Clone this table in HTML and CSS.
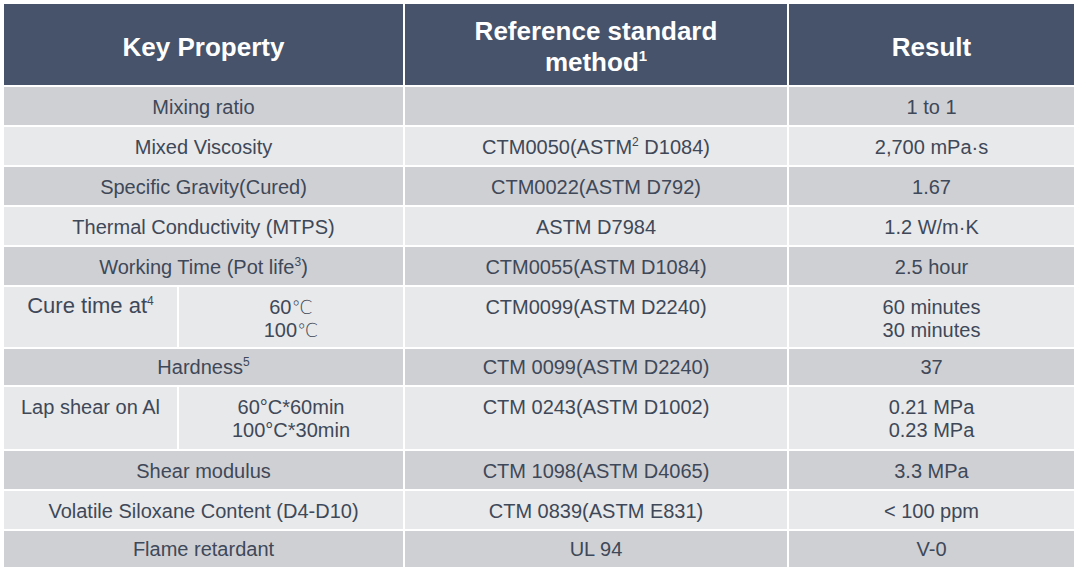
FILE: index.html
```html
<!DOCTYPE html>
<html lang="en">
<head>
<meta charset="utf-8">
<title>Key Properties</title>
<link rel="stylesheet" href="styles.css">
</head>
<body>
<div class="sheet">
  <div class="th span2"><span>Key Property</span></div>
  <div class="th"><span>Reference standard<br>method<sup>1</sup></span></div>
  <div class="th"><span>Result</span></div>

  <div class="td dark span2">Mixing ratio</div>
  <div class="td dark"></div>
  <div class="td dark">1 to 1</div>

  <div class="td light span2">Mixed Viscosity</div>
  <div class="td light">CTM0050(ASTM<sup>2</sup> D1084)</div>
  <div class="td light">2,700 mPa·s</div>

  <div class="td dark span2">Specific Gravity(Cured)</div>
  <div class="td dark">CTM0022(ASTM D792)</div>
  <div class="td dark">1.67</div>

  <div class="td light span2">Thermal Conductivity (MTPS)</div>
  <div class="td light">ASTM D7984</div>
  <div class="td light">1.2 W/m·K</div>

  <div class="td dark span2">Working Time (Pot life<sup>3</sup>)</div>
  <div class="td dark">CTM0055(ASTM D1084)</div>
  <div class="td dark">2.5 hour</div>

  <div class="td light big">Cure time at<sup>4</sup></div>
  <div class="td light">60<span class="deg">℃</span><br>100<span class="deg">℃</span></div>
  <div class="td light">CTM0099(ASTM D2240)</div>
  <div class="td light">60 minutes<br>30 minutes</div>

  <div class="td dark short span2">Hardness<sup>5</sup></div>
  <div class="td dark short">CTM 0099(ASTM D2240)</div>
  <div class="td dark short">37</div>

  <div class="td light">Lap shear on Al</div>
  <div class="td light">60°C*60min<br>100°C*30min</div>
  <div class="td light">CTM 0243(ASTM D1002)</div>
  <div class="td light">0.21 MPa<br>0.23 MPa</div>

  <div class="td dark span2">Shear modulus</div>
  <div class="td dark">CTM 1098(ASTM D4065)</div>
  <div class="td dark">3.3 MPa</div>

  <div class="td light span2">Volatile Siloxane Content (D4-D10)</div>
  <div class="td light">CTM 0839(ASTM E831)</div>
  <div class="td light">&lt; 100 ppm</div>

  <div class="td dark short span2">Flame retardant</div>
  <div class="td dark short">UL 94</div>
  <div class="td dark short">V-0</div>
</div>
</body>
</html>
```
FILE: styles.css
```css
html, body {
  margin: 0;
  padding: 0;
  background: #ffffff;
}

body {
  font-family: "Liberation Sans", Arial, "Noto Sans CJK SC", sans-serif;
  color: #3e4858;
}

.sheet {
  margin: 4px 0 0 4px;
  width: 1070px;
  display: grid;
  grid-template-columns: 173px 224px 382px 285px;
  grid-template-rows: 81px 38px 38px 38px 38px 38px 60px 36px 62px 38px 38px 36px;
  gap: 2px;
}

.span2 {
  grid-column: span 2;
}

.th {
  background: #46536a;
  color: #ffffff;
  font-weight: bold;
  font-size: 26px;
  line-height: 31px;
  display: flex;
  align-items: center;
  justify-content: center;
  text-align: center;
  padding-top: 5px;
  box-sizing: border-box;
}

.th sup {
  font-size: 15px;
  line-height: 0;
  vertical-align: 10px;
}

.td {
  font-size: 20px;
  line-height: 23px;
  text-align: center;
  padding-top: 9px;
  box-sizing: border-box;
}

.td.short {
  padding-top: 7px;
}

.td sup {
  font-size: 12px;
  line-height: 0;
  vertical-align: 8px;
}

.dark {
  background: #cfd0d4;
}

.light {
  background: #e8e9ea;
}

.td.big {
  font-size: 22px;
  line-height: 24px;
  padding-top: 7px;
}

.deg {
  font-family: "DejaVu Sans", sans-serif;
  font-weight: 200;
  font-size: 19px;
  line-height: 0;
}
```
